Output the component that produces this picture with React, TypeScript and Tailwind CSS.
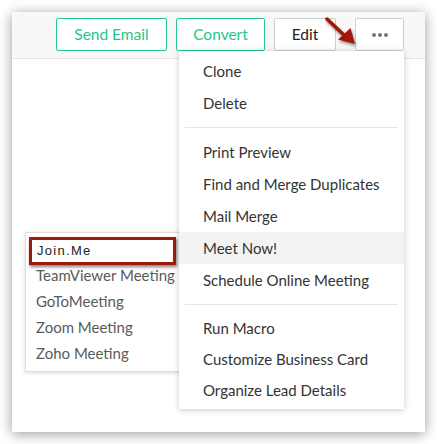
import React from "react";

const groups = [
  ["Clone", "Delete"],
  ["Print Preview", "Find and Merge Duplicates", "Mail Merge", "Meet Now!", "Schedule Online Meeting"],
  ["Run Macro", "Customize Business Card", "Organize Lead Details"],
];

const meetings = ["TeamViewer Meeting", "GoToMeeting", "Zoom Meeting", "Zoho Meeting"];

function Arrow() {
  return (
    <svg
      className="absolute left-[312px] top-[4px] drop-shadow-[1px_2px_1.5px_rgba(0,0,0,0.45)]"
      width="34"
      height="32"
      viewBox="0 0 34 32"
    >
      <line x1="3" y1="3" x2="21" y2="20" stroke="#a3170b" strokeWidth="3.5" strokeLinecap="round" />
      <polygon points="31,28 14,23.5 26.5,12" fill="#a3170b" />
    </svg>
  );
}

export default function App() {
  return (
    <div className="p-3 font-['Lato',sans-serif]">
      <div className="relative h-[420px] bg-white shadow-[0_2px_12px_rgba(0,0,0,0.4)]">
        <div className="flex h-[47px] justify-end gap-[9px] border-b border-[#e6e6e6] bg-[#f8f8f8] pr-[21px] pt-[6px]">
          <button className="h-[33px] w-[111px] rounded-[2px] border border-[#22c98a] bg-white text-[15.5px] text-[#1fc78a]">
            Send Email
          </button>
          <button className="h-[33px] w-[89px] rounded-[2px] border border-[#22c98a] bg-white text-[15.5px] text-[#1fc78a]">
            Convert
          </button>
          <button className="mr-[10px] h-[33px] w-[62px] rounded-[2px] border border-[#cfcfcf] bg-white text-[15.5px] text-[#222]">
            Edit
          </button>
          <button className="flex h-[33px] w-[49px] items-center justify-center gap-[2px] rounded-[2px] border border-[#cfcfcf] bg-white">
            <span className="size-[4px] rounded-full bg-[#777]" />
            <span className="size-[4px] rounded-full bg-[#777]" />
            <span className="size-[4px] rounded-full bg-[#777]" />
          </button>
        </div>

        <Arrow />

        <div className="absolute left-[13px] top-[220px] w-[170px] border border-[#dedede] bg-white pb-[5px] pt-[4px] shadow-[0_1px_4px_rgba(0,0,0,0.15)]">
          <div className="mb-[-3px] ml-[3px] flex h-[28px] w-[147px] items-center border-[3px] border-[#9b1c0e] bg-white pl-[5px] font-['Liberation_Sans',sans-serif] text-[13px] tracking-[1.3px] text-[#222] shadow-[1px_2px_3px_rgba(0,0,0,0.5)]">
            Join.Me
          </div>
          {meetings.map((m) => (
            <div key={m} className="flex h-[26px] items-center pl-[10px] text-[15px] text-[#5a5a5a]">
              {m}
            </div>
          ))}
        </div>

        <div className="absolute left-[167px] top-[39px] z-10 w-[225px] bg-white pb-[3px] pt-[4px] shadow-[0_1px_6px_rgba(0,0,0,0.22)]">
          {groups.map((g, i) => (
            <div key={i}>
              {i > 0 && <div className="mx-[6px] my-2 h-px bg-[#e6e6e6]" />}
              {g.map((item) => (
                <div
                  key={item}
                  className={`flex items-center pl-[24px] text-[15px] text-[#333] ${
                    i === 2 ? "h-[31px]" : "h-[32px]"
                  } ${item === "Meet Now!" ? "bg-[#f3f3f3]" : ""}`}
                >
                  {item}
                </div>
              ))}
            </div>
          ))}
        </div>
      </div>
    </div>
  );
}
